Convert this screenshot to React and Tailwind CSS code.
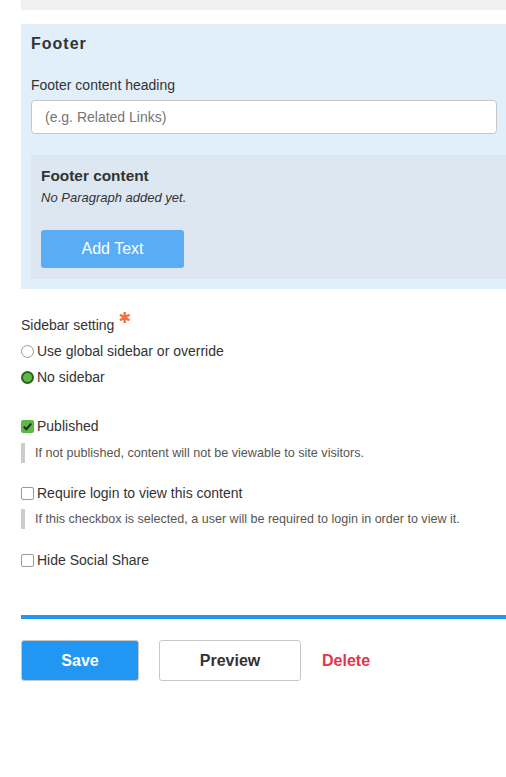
export default function App() {
  const font = { fontFamily: '"Liberation Sans", Arial, sans-serif' };
  return (
    <div className="min-h-[777px] bg-white pl-[21px] text-[#333]" style={font}>
      <div className="h-[10px] bg-[#f0f0f0]" />
      <div className="mt-[14px] bg-[#e1effb] pt-[10px] pb-[10px] pl-[10px]">
        <div className="text-[16px] leading-[20px] font-bold tracking-[1px] text-[#333]">Footer</div>
        <div className="mt-[21px] text-[14px] leading-[20px] text-[#333]">Footer content heading</div>
        <div className="mt-[5px] mr-[9px] flex h-[34px] items-center rounded-[4px] border border-[#c8c8c8] bg-white pl-[13px] text-[14px] text-[#757575]">
          (e.g. Related Links)
        </div>
        <div className="mt-[21px] bg-[#dce7f1] pt-[11px] pb-[11px] pl-[10px]">
          <div className="text-[15.4px] leading-[20px] font-bold text-[#333]">Footer content</div>
          <div className="mt-[4px] text-[13px] leading-[16px] italic text-[#333]">No Paragraph added yet.</div>
          <div className="mt-[24px] flex h-[38px] w-[143px] items-center justify-center rounded-[3px] bg-[#5aadf5] text-[16px] text-white">
            Add Text
          </div>
        </div>
      </div>

      <div className="mt-[26px] flex items-start text-[14px] leading-[20px]">
        <span>Sidebar setting</span>
        <span
          className="ml-[4px] -mt-[7px] text-[15px] leading-[20px] text-[#f4703a]"
          style={{ fontFamily: '"DejaVu Sans", sans-serif' }}
        >
          ✱
        </span>
      </div>
      <div className="mt-[6px] flex h-[20px] items-center text-[14px]">
        <span className="mr-[3px] inline-block h-[13px] w-[13px] rounded-full border border-[#9a9a9a] bg-white" />
        <span>Use global sidebar or override</span>
      </div>
      <div className="mt-[6px] flex h-[20px] items-center text-[14px]">
        <span className="mr-[3px] flex h-[13px] w-[13px] items-center justify-center rounded-full border-[2px] border-[#2f5d22] bg-[#5cb947]" />
        <span>No sidebar</span>
      </div>

      <div className="mt-[29px] flex h-[20px] items-center text-[14px]">
        <span className="mr-[3px] flex h-[13px] w-[13px] items-center justify-center rounded-[2px] bg-[#5cb947]">
          <svg width="11" height="11" viewBox="0 0 12 12">
            <path d="M2 6.2 L4.8 9 L10 2.8" fill="none" stroke="#1e2a1a" strokeWidth="2.2" />
          </svg>
        </span>
        <span>Published</span>
      </div>
      <div className="mt-[7px] flex h-[20px] items-center border-l-[4px] border-[#cccccc] pl-[10px] text-[12.6px] text-[#555]">
        If not published, content will not be viewable to site visitors.
      </div>

      <div className="mt-[20px] flex h-[20px] items-center text-[14px]">
        <span className="mr-[3px] inline-block h-[13px] w-[13px] rounded-[2px] border border-[#9a9a9a] bg-white" />
        <span>Require login to view this content</span>
      </div>
      <div className="mt-[6px] flex h-[20px] items-center border-l-[4px] border-[#cccccc] pl-[10px] text-[12.55px] text-[#555]">
        If this checkbox is selected, a user will be required to login in order to view it.
      </div>

      <div className="mt-[21px] flex h-[20px] items-center text-[14px]">
        <span className="mr-[3px] inline-block h-[13px] w-[13px] rounded-[2px] border border-[#9a9a9a] bg-white" />
        <span>Hide Social Share</span>
      </div>

      <div className="mt-[45px] h-[4px] bg-[#2196f3]" />

      <div className="mt-[21px] flex items-center">
        <div className="flex h-[41px] w-[118px] items-center justify-center rounded-[3px] border border-[#c8c8c8] bg-[#2196f3] text-[16px] font-bold text-white">
          Save
        </div>
        <div className="ml-[20px] flex h-[41px] w-[142px] items-center justify-center rounded-[3px] border border-[#c8c8c8] bg-white text-[16px] font-bold text-[#333]">
          Preview
        </div>
        <div className="ml-[21px] text-[16px] font-bold text-[#e0364a]">Delete</div>
      </div>
    </div>
  );
}
